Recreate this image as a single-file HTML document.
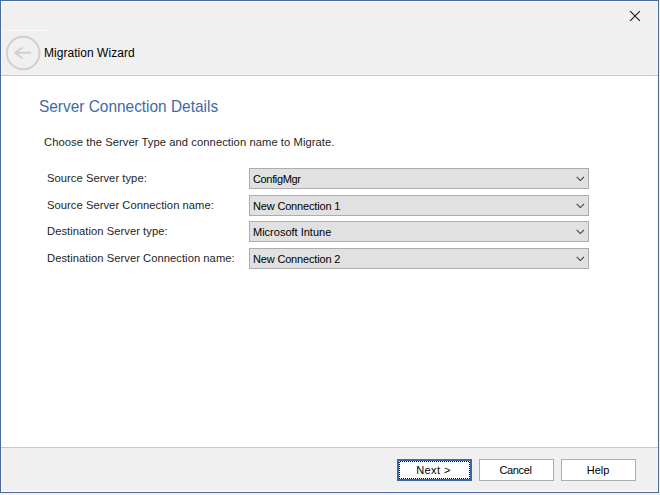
<!DOCTYPE html>
<html><head><meta charset="utf-8">
<style>
html,body{margin:0;padding:0;}
body{width:660px;height:495px;background:#f3f3f3;position:relative;overflow:hidden;font-family:"Liberation Sans",sans-serif;color:#000;}
.abs{position:absolute;}
#win{left:0;top:0;width:657px;height:491px;border:1px solid #4a6a9e;background:#fff;}
#hdr{left:1px;top:1px;width:657px;height:74px;background:#f0f0f0;border-top:1px solid #f9f9f6;border-left:1px solid #f9f9f6;border-right:1px solid #f9f9f6;box-sizing:border-box;}
#hsep{left:1px;top:75px;width:657px;height:1px;background:#c8c8c8;}
#fsep{left:1px;top:447px;width:657px;height:1px;background:#c8c8c8;}
#ftr{left:1px;top:448px;width:657px;height:44px;background:#f0f0f0;border-bottom:1px solid #f9f9f6;border-left:1px solid #f9f9f6;border-right:1px solid #f9f9f6;box-sizing:border-box;}
.t{position:absolute;white-space:nowrap;line-height:1;}
.lbl{font-size:11.2px;letter-spacing:0.05px;color:#1e1e1e;left:47px;}
.cb{position:absolute;left:249px;width:340px;height:21px;box-sizing:border-box;border:1px solid #adadad;background:#e1e1e1;}
.cb span{position:absolute;left:3px;top:5px;font-size:11px;line-height:1;white-space:nowrap;color:#000;}
.cb svg{position:absolute;left:325px;top:6px;}
.btn{position:absolute;top:459px;width:75px;height:22px;box-sizing:border-box;border:1px solid #adadad;background:#fff;}
.btn span{position:absolute;left:0;right:0;text-align:center;top:5px;font-size:11px;line-height:1;color:#000;}
</style></head>
<body>
<div id="win" class="abs"></div>
<div id="hdr" class="abs"></div>
<div class="abs" style="left:3px;top:30px;width:48px;height:1px;background:#f8f8f8"></div>
<div id="hsep" class="abs"></div>
<div id="fsep" class="abs"></div>
<div id="ftr" class="abs"></div>

<!-- close X -->
<svg class="abs" style="left:625px;top:6px" width="20" height="20" viewBox="0 0 20 20">
<path d="M5.2 5.2 L14.8 14.8 M14.8 5.2 L5.2 14.8" stroke="#1a1a1a" stroke-width="1.1" fill="none"/>
</svg>

<!-- back circle -->
<svg class="abs" style="left:0;top:30px" width="48" height="48" viewBox="0 0 48 48">
<circle cx="23.2" cy="23" r="16.3" stroke="#d0d0d0" stroke-width="1.9" fill="none"/>
<path d="M15.2 22.8 H31 M22.6 17.4 L15.2 22.8 L22.6 28.4" stroke="#d0d0d0" stroke-width="1.9" fill="none"/>
</svg>

<div class="t" style="left:44px;top:47px;font-size:12px;letter-spacing:0.04px;color:#000">Migration Wizard</div>
<div class="t" style="left:39px;top:98px;font-size:16.1px;color:#4169a6;transform:scaleX(0.958);transform-origin:0 0">Server Connection Details</div>
<div class="t" style="left:44px;top:137px;font-size:11.2px;letter-spacing:0.075px;color:#1e1e1e">Choose the Server Type and connection name to Migrate.</div>

<div class="t lbl" style="top:173px">Source Server type:</div>
<div class="t lbl" style="top:200px">Source Server Connection name:</div>
<div class="t lbl" style="top:226px">Destination Server type:</div>
<div class="t lbl" style="top:253px">Destination Server Connection name:</div>

<div class="cb" style="top:168px"><span style="letter-spacing:-0.35px">ConfigMgr</span><svg width="10" height="6" viewBox="0 0 10 6"><path d="M1.7 1.9 L5.35 5.55 L9.0 1.9" stroke="#444" stroke-width="1.15" fill="none"/></svg></div>
<div class="cb" style="top:195px"><span style="letter-spacing:-0.17px">New Connection 1</span><svg width="10" height="6" viewBox="0 0 10 6"><path d="M1.7 1.9 L5.35 5.55 L9.0 1.9" stroke="#444" stroke-width="1.15" fill="none"/></svg></div>
<div class="cb" style="top:221px"><span>Microsoft Intune</span><svg width="10" height="6" viewBox="0 0 10 6"><path d="M1.7 1.9 L5.35 5.55 L9.0 1.9" stroke="#444" stroke-width="1.15" fill="none"/></svg></div>
<div class="cb" style="top:248px"><span style="letter-spacing:-0.17px">New Connection 2</span><svg width="10" height="6" viewBox="0 0 10 6"><path d="M1.7 1.9 L5.35 5.55 L9.0 1.9" stroke="#444" stroke-width="1.15" fill="none"/></svg></div>

<div class="btn" style="left:397px;border:2px solid #3c67a6"><div class="abs" style="left:0;top:0;width:71px;height:1px;background:repeating-linear-gradient(90deg,transparent 0 1px,#000 1px 2px)"></div><div class="abs" style="left:0;top:17px;width:71px;height:1px;background:repeating-linear-gradient(90deg,#000 0 1px,transparent 1px 2px)"></div><div class="abs" style="left:0;top:0;width:1px;height:18px;background:repeating-linear-gradient(180deg,transparent 0 1px,#000 1px 2px)"></div><div class="abs" style="left:70px;top:0;width:1px;height:18px;background:repeating-linear-gradient(180deg,transparent 0 1px,#000 1px 2px)"></div><span style="top:4px;left:-2px;letter-spacing:0.4px">Next &gt;</span></div>
<div class="btn" style="left:479px"><span style="left:-2px;letter-spacing:-0.4px">Cancel</span></div>
<div class="btn" style="left:561px"><span style="left:-1px">Help</span></div>
</body></html>
